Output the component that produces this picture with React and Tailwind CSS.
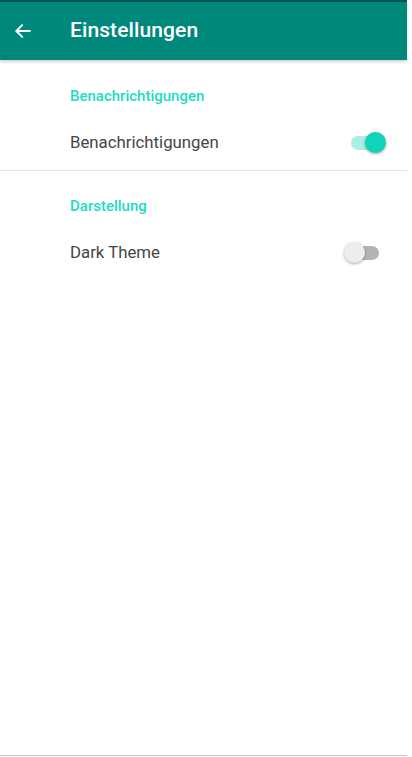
import React, { useState } from 'react';

function Toggle({ on, onChange }) {
  return (
    <button onClick={() => onChange(!on)} className="relative w-[42px] h-[22px] flex items-center">
      <span className={`absolute left-[7px] right-[7px] h-[14px] rounded-full ${on ? 'bg-[#a9efe4]' : 'bg-[#b3b3b3]'}`} />
      <span
        className={`absolute top-0 w-[21px] h-[21px] rounded-full shadow-[0_1px_3px_rgba(0,0,0,0.35)] ${on ? 'left-[21px] bg-[#0fd3bb]' : 'left-0 bg-[#ededed]'}`}
      />
    </button>
  );
}

export default function App() {
  const [notify, setNotify] = useState(true);
  const [dark, setDark] = useState(false);

  return (
    <div className="w-[407px] min-h-[757px] flex flex-col bg-white" style={{ fontFamily: 'Roboto, "Noto Sans", sans-serif' }}>
      {/* Toolbar */}
      <div className="h-[60px] bg-[#00897b] border-t-2 border-[#00574e] flex items-center shadow-[0_2px_3px_rgba(0,0,0,0.18)] relative z-10">
        <button className="w-[46px] h-full flex items-center justify-center">
          <svg width="20" height="20" viewBox="0 0 24 24" fill="none" stroke="white" strokeWidth="2.4" strokeLinecap="square">
            <path d="M20 12H5" />
            <path d="M11 5l-7 7 7 7" strokeLinecap="round" strokeLinejoin="miter" />
          </svg>
        </button>
        <h1 className="ml-[24px] text-[21px] font-medium text-white tracking-[0.1px]">Einstellungen</h1>
      </div>

      {/* Benachrichtigungen */}
      <div className="pt-[26px]">
        <div className="pl-[70px] h-[20px] text-[15px] leading-[20px] font-medium text-[#1ddcc0]">Benachrichtigungen</div>
        <div className="mt-[9px] h-[55px] flex items-center justify-between pl-[70px] pr-[21px]">
          <span className="text-[16.8px] text-[#454545]">Benachrichtigungen</span>
          <Toggle on={notify} onChange={setNotify} />
        </div>
      </div>
      <div className="h-[1px] bg-[#e3e3e3]" />

      {/* Darstellung */}
      <div className="pt-[25px]">
        <div className="pl-[70px] h-[20px] text-[15px] leading-[20px] font-medium text-[#1ddcc0]">Darstellung</div>
        <div className="mt-[9px] h-[55px] flex items-center justify-between pl-[70px] pr-[21px]">
          <span className="text-[16.8px] text-[#454545]">Dark Theme</span>
          <Toggle on={dark} onChange={setDark} />
        </div>
      </div>

      <div className="flex-1" />
      <div className="h-[1px] bg-[#c4c4c4]" />
      <div className="h-[1px] bg-white" />
    </div>
  );
}
